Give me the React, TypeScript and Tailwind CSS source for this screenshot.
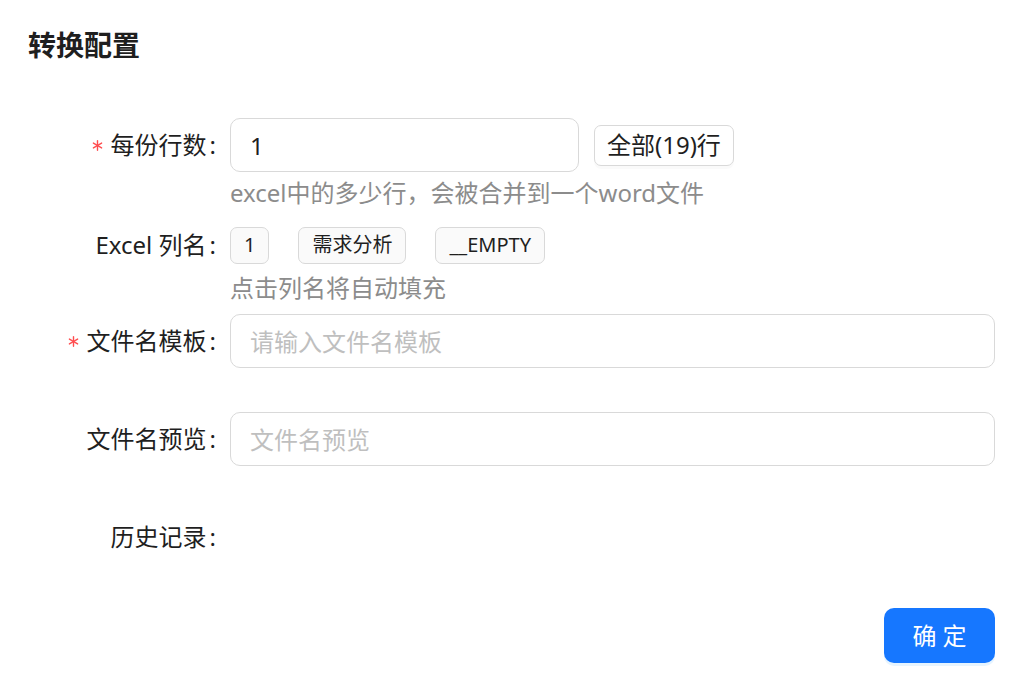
import React from 'react';

const FONT = { fontFamily: '"Noto Sans", "Noto Sans CJK SC", sans-serif' };

const Required: React.FC = () => (
  <svg width="11" height="11" viewBox="0 0 11 11" className="mr-[8px] shrink-0" aria-hidden>
    <g stroke="#ff4d4f" strokeWidth="1.4" strokeLinecap="round">
      <line x1="5.5" y1="0.8" x2="5.5" y2="10.2" />
      <line x1="1.4" y1="3.1" x2="9.6" y2="7.9" />
      <line x1="1.4" y1="7.9" x2="9.6" y2="3.1" />
    </g>
  </svg>
);

interface LabelProps {
  text: string;
  required?: boolean;
}

const Label: React.FC<LabelProps> = ({ text, required }) => (
  <div className="w-[202px] shrink-0 flex items-center justify-end pr-[14px] text-[24px] leading-[38px] text-[#1f1f1f]">
    {required && <Required />}
    <span>{text}</span>
    <span className="ml-[3px]">:</span>
  </div>
);

const Tag: React.FC<{ children: React.ReactNode }> = ({ children }) => (
  <span className="inline-flex items-center h-[37px] px-[13px] rounded-[7px] border border-[#d9d9d9] bg-[#fafafa] text-[20px] text-[#1f1f1f] cursor-pointer">
    {children}
  </span>
);

export default function App() {
  return (
    <div className="min-h-screen bg-white pl-[28px] pr-[22px] pt-[25px]" style={FONT}>
      {/* Title */}
      <h2 className="text-[28px] leading-[40px] font-bold text-[#1f1f1f]">转换配置</h2>

      {/* 每份行数 */}
      <div className="mt-[53px] flex items-center h-[54px]">
        <Label text="每份行数" required />
        <div className="flex items-center gap-[15px]">
          <input
            defaultValue="1"
            className="w-[349px] h-[54px] px-[19px] rounded-[10px] border border-[#d9d9d9] text-[24px] text-[#1f1f1f] outline-none"
          />
          <button className="h-[41px] px-[12px] rounded-[7px] border border-[#d9d9d9] bg-white text-[24px] text-[#1f1f1f] shadow-[0_3px_0_rgba(0,0,0,0.02)]">
            全部(19)行
          </button>
        </div>
      </div>
      <div className="ml-[202px] mt-[2px] text-[24px] leading-[38px] text-[#8c8c8c]">
        excel中的多少行，会被合并到一个word文件
      </div>

      {/* Excel 列名 */}
      <div className="mt-[14px] flex items-center h-[38px]">
        <Label text="Excel 列名" />
        <div className="flex items-center gap-[29px]">
          <Tag>1</Tag>
          <Tag>需求分析</Tag>
          <Tag>__EMPTY</Tag>
        </div>
      </div>
      <div className="ml-[202px] mt-[5px] text-[24px] leading-[38px] text-[#8c8c8c]">
        点击列名将自动填充
      </div>

      {/* 文件名模板 */}
      <div className="mt-[7px] flex items-center h-[54px]">
        <Label text="文件名模板" required />
        <input
          placeholder="请输入文件名模板"
          className="flex-1 h-[54px] px-[19px] rounded-[10px] border border-[#d9d9d9] text-[24px] text-[#1f1f1f] placeholder:text-[#bfbfbf] outline-none"
        />
      </div>

      {/* 文件名预览 */}
      <div className="mt-[44px] flex items-center h-[54px]">
        <Label text="文件名预览" />
        <input
          placeholder="文件名预览"
          className="flex-1 h-[54px] px-[19px] rounded-[10px] border border-[#d9d9d9] text-[24px] text-[#1f1f1f] placeholder:text-[#bfbfbf] outline-none"
        />
      </div>

      {/* 历史记录 */}
      <div className="mt-[44px] flex items-center h-[54px]">
        <Label text="历史记录" />
      </div>

      {/* Footer */}
      <div className="mt-[44px] flex justify-end">
        <button className="h-[55px] w-[111px] rounded-[10px] bg-[#1677ff] text-white text-[24px] shadow-[0_3px_0_rgba(5,145,255,0.1)]">
          确 定
        </button>
      </div>
    </div>
  );
}
